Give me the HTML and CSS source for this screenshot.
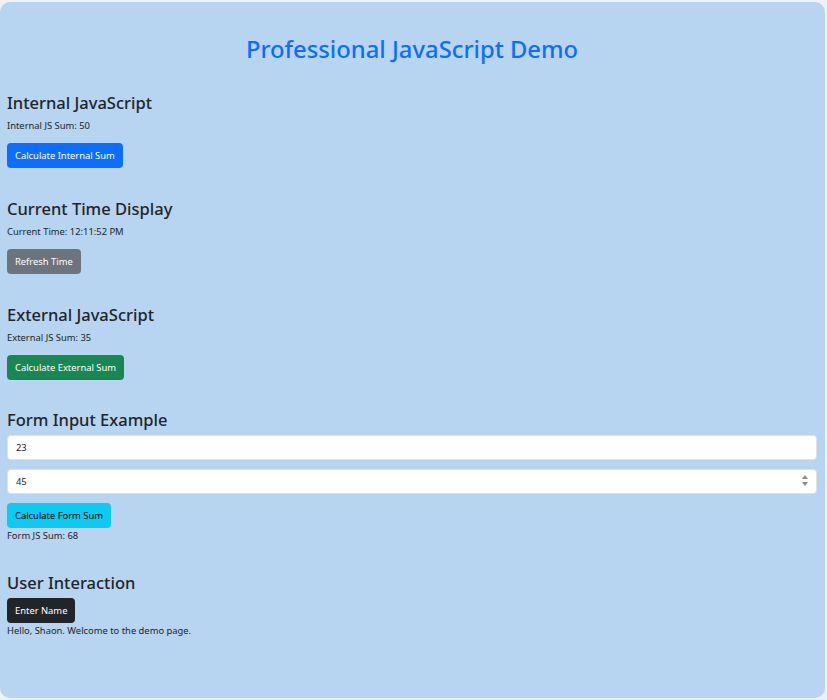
FILE: index.html
```html
<!DOCTYPE html>
<html lang="en">
<head>
<meta charset="utf-8">
<title>Professional JavaScript Demo</title>
<link rel="stylesheet" href="styles.css">
</head>
<body>
<div class="container">
  <h1 class="title">Professional JavaScript Demo</h1>

  <section class="section">
    <h3 class="heading">Internal JavaScript</h3>
    <p class="text">Internal JS Sum: 50</p>
    <button class="btn btn-primary">Calculate Internal Sum</button>
  </section>

  <section class="section">
    <h3 class="heading">Current Time Display</h3>
    <p class="text">Current Time: 12:11:52 PM</p>
    <button class="btn btn-secondary">Refresh Time</button>
  </section>

  <section class="section section-ext">
    <h3 class="heading">External JavaScript</h3>
    <p class="text">External JS Sum: 35</p>
    <button class="btn btn-success">Calculate External Sum</button>
  </section>

  <section class="section section-form">
    <h3 class="heading">Form Input Example</h3>
    <div class="field"><input class="input" type="text" value="23"></div>
    <div class="field">
      <input class="input" type="text" value="45">
      <span class="spin"><span class="up"></span><span class="down"></span></span>
    </div>
    <button class="btn btn-info">Calculate Form Sum</button>
    <p class="text tight">Form JS Sum: 68</p>
  </section>

  <section class="section">
    <h3 class="heading">User Interaction</h3>
    <button class="btn btn-dark">Enter Name</button>
    <p class="text tight">Hello, Shaon. Welcome to the demo page.</p>
  </section>
</div>
</body>
</html>
```

FILE: styles.css
```css
* { box-sizing: border-box; }
html, body { margin: 0; padding: 0; }
body {
  background: #eef1f6;
  font-family: "Noto Sans", "Open Sans", sans-serif;
  color: #212529;
  font-size: 9.4px;
  line-height: 16px;
  padding: 2px 2px 2px 0;
}
.container {
  background: #b7d4f0;
  border-radius: 10px;
  height: 696px;
  padding: 13px 8px 0 7px;
}
.title {
  margin: 18px 0 27px;
  text-align: center;
  color: #0d6efd;
  font-weight: 500;
  font-size: 23.8px;
  line-height: 32px;
}
.section { margin-bottom: 30px; }
.section-ext { margin-bottom: 29px; }
.section-form { margin-bottom: 28px; }
.heading {
  margin: 0 0 4px;
  font-size: 16.5px;
  font-weight: 500;
  line-height: 22px;
}
.text { margin: 0 0 9px; }
.text.tight { margin: 0; }
.btn {
  display: inline-block;
  vertical-align: top;
  font-family: inherit;
  font-size: 9.4px;
  line-height: 15px;
  padding: 4px 7px;
  border: 1px solid transparent;
  border-radius: 4px;
  color: #fff;
  cursor: pointer;
}
.btn-primary { background: #0d6efd; }
.btn-secondary { background: #6c757d; }
.btn-success { background: #198754; }
.btn-info { background: #0dcaf0; color: #000; }
.btn-dark { background: #212529; }
.field { position: relative; margin: 0 0 9px; }
.input {
  display: block;
  width: 100%;
  height: 25px;
  font-family: inherit;
  font-size: 9.4px;
  color: #212529;
  background: #fff;
  border: 1px solid #dee2e6;
  border-radius: 4px;
  padding: 4px 8px;
  outline: none;
}
.spin {
  position: absolute;
  right: 9px;
  top: 6px;
  display: flex;
  flex-direction: column;
  gap: 3px;
}
.up, .down {
  width: 0; height: 0;
  border-left: 3px solid transparent;
  border-right: 3px solid transparent;
}
.up { border-bottom: 4px solid #8a8a8a; }
.down { border-top: 4px solid #8a8a8a; }
```
